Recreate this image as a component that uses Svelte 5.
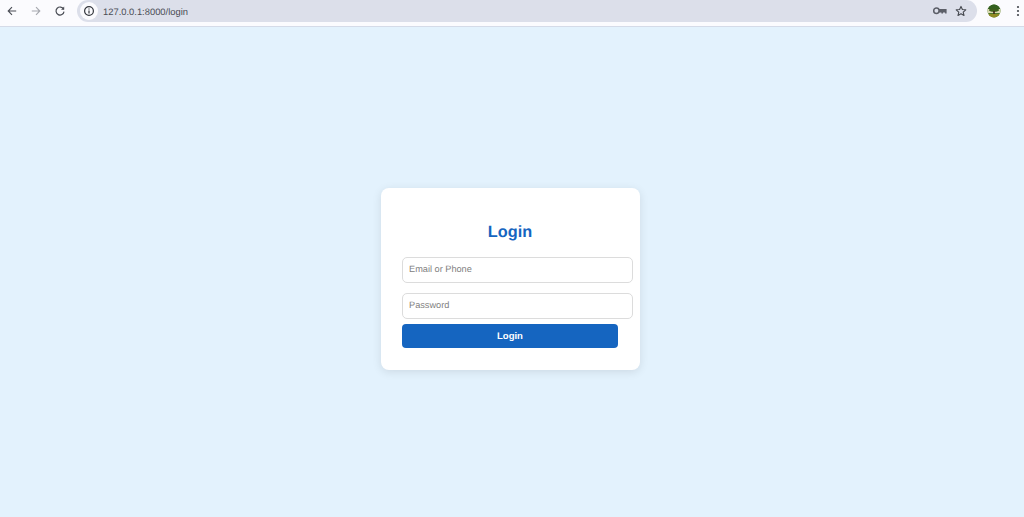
<script>
  let email = $state("");
  let password = $state("");
</script>

<div class="page">
  <header class="toolbar">
    <div class="nav">
      <svg width="12" height="12" viewBox="0 0 12 12" class="ico"><path d="M10.2 6H2.4M6 2.2 2.2 6 6 9.8" fill="none" stroke="#4a4d55" stroke-width="1.1"/></svg>
      <svg width="12" height="12" viewBox="0 0 12 12" class="ico"><path d="M1.8 6h7.8M6 2.2 9.8 6 6 9.8" fill="none" stroke="#a5a7ae" stroke-width="1.1"/></svg>
      <svg width="12" height="12" viewBox="0 0 12 12" class="ico"><path d="M9.6 4.2A4 4 0 1 0 10 6.6" fill="none" stroke="#4a4d55" stroke-width="1.2"/><path d="M10.2 1.6v3.2H7z" fill="#4a4d55"/></svg>
    </div>
    <div class="omnibox">
      <span class="site-info">
        <svg width="12" height="12" viewBox="0 0 12 12"><circle cx="6" cy="6" r="4.4" fill="none" stroke="#33363c" stroke-width="1.2"/><path d="M6 5.4v3M6 3.4v1.2" stroke="#33363c" stroke-width="1.2"/></svg>
      </span>
      <span class="url">127.0.0.1:8000/login</span>
      <span class="spacer"></span>
      <svg width="14" height="10" viewBox="0 0 14 10"><circle cx="3.4" cy="4.8" r="2.7" fill="none" stroke="#5c5f68" stroke-width="1.5"/><path d="M6 3h7.6v4.6h-1.5V6.4H10v1.2H8.4V6.4H6z" fill="#5c5f68"/></svg>
      <svg class="star" width="12" height="12" viewBox="0 0 12 12"><path d="M6 1.4 7.4 4.5 10.8 4.8 8.2 7.1 9 10.4 6 8.7 3 10.4 3.8 7.1 1.2 4.8 4.6 4.5z" fill="none" stroke="#45484f" stroke-width="1.1" stroke-linejoin="round"/></svg>
    </div>
    <div class="profile">
      <svg width="14" height="14" viewBox="0 0 14 14"><defs><clipPath id="avatar"><circle cx="7" cy="7" r="6.5"/></clipPath></defs><g clip-path="url(#avatar)"><rect width="14" height="14" fill="#4f7a2c"/><rect width="14" height="5" fill="#33601f"/><rect y="5" width="14" height="4" fill="#d8d8b0"/><ellipse cx="7" cy="6" rx="5" ry="1.8" fill="#3d5f1c"/><rect x="6.2" y="7" width="1.6" height="4" fill="#3b2a16"/><rect y="10" width="14" height="4" fill="#8f8a24"/></g></svg>
    </div>
    <svg class="menu" width="4" height="12" viewBox="0 0 4 12"><circle cx="2" cy="2" r="1.1" fill="#45484f"/><circle cx="2" cy="6" r="1.1" fill="#45484f"/><circle cx="2" cy="10" r="1.1" fill="#45484f"/></svg>
  </header>

  <main class="content">
    <form class="card" onsubmit={(e) => e.preventDefault()}>
      <h2>Login</h2>
      <input type="text" placeholder="Email or Phone" bind:value={email} />
      <input type="password" placeholder="Password" bind:value={password} />
      <button type="submit">Login</button>
    </form>
  </main>
</div>

<style>
  :global(body) {
    margin: 0;
    font-family: "Liberation Sans", Arial, sans-serif;
    text-rendering: geometricPrecision;
  }
  .page {
    height: 517px;
    display: flex;
    flex-direction: column;
    background: #e3f2fd;
    overflow: hidden;
  }
  .toolbar {
    height: 27px;
    box-sizing: border-box;
    display: flex;
    align-items: center;
    background: #fbfbfe;
    border-bottom: 1px solid #d5dbe8;
    padding: 0 4px 4px 6px;
  }
  .nav {
    display: flex;
    gap: 12px;
    margin-right: 12px;
  }
  .ico {
    display: block;
  }
  .omnibox {
    flex: 1;
    height: 22px;
    display: flex;
    align-items: center;
    gap: 8px;
    background: #dcdfea;
    border-radius: 11px;
    padding: 0 10px 0 0;
    margin-right: 10px;
    margin-left: -1px;
  }
  .site-info {
    width: 18px;
    height: 18px;
    margin-left: 3px;
    margin-right: -3px;
    border-radius: 50%;
    background: #fbfbfe;
    display: flex;
    align-items: center;
    justify-content: center;
  }
  .url {
    font-size: 9.4px;
    color: #4a4d55;
    font-family: "Liberation Sans", sans-serif;
  }
  .spacer {
    flex: 1;
  }
  .profile {
    display: flex;
    margin-right: 15px;
  }
  .content {
    flex: 1;
    display: flex;
    align-items: center;
    justify-content: center;
    padding: 14px 3px 0 0;
  }
  .card {
    width: 259px;
    height: 182px;
    box-sizing: border-box;
    background: #fff;
    border-radius: 8px;
    box-shadow: 0 2px 10px rgba(0, 0, 0, 0.1);
    padding: 33px 21px 0;
    display: flex;
    flex-direction: column;
    align-items: flex-start;
  }
  h2 {
    margin: 0 0 14px;
    width: 216px;
    text-align: center;
    color: #1565c0;
    font-size: 16.3px;
    line-height: 21px;
    padding-top: 1px;
    box-sizing: content-box;
  }
  input {
    width: 231px;
    height: 26px;
    box-sizing: border-box;
    padding: 0 6px 2px;
    margin-bottom: 10px;
    border: 1px solid #dcdcdc;
    border-radius: 5px;
    font-family: inherit;
    font-size: 9.2px;
    flex: none;
    text-rendering: geometricPrecision;
  }
  input::placeholder {
    color: #808080;
  }
  button {
    width: 216px;
    height: 24px;
    margin-top: -5px;
    border: none;
    border-radius: 4px;
    background: #1565c0;
    color: #fff;
    font-family: inherit;
    font-size: 9.5px;
    font-weight: bold;
    text-rendering: geometricPrecision;
  }
</style>
